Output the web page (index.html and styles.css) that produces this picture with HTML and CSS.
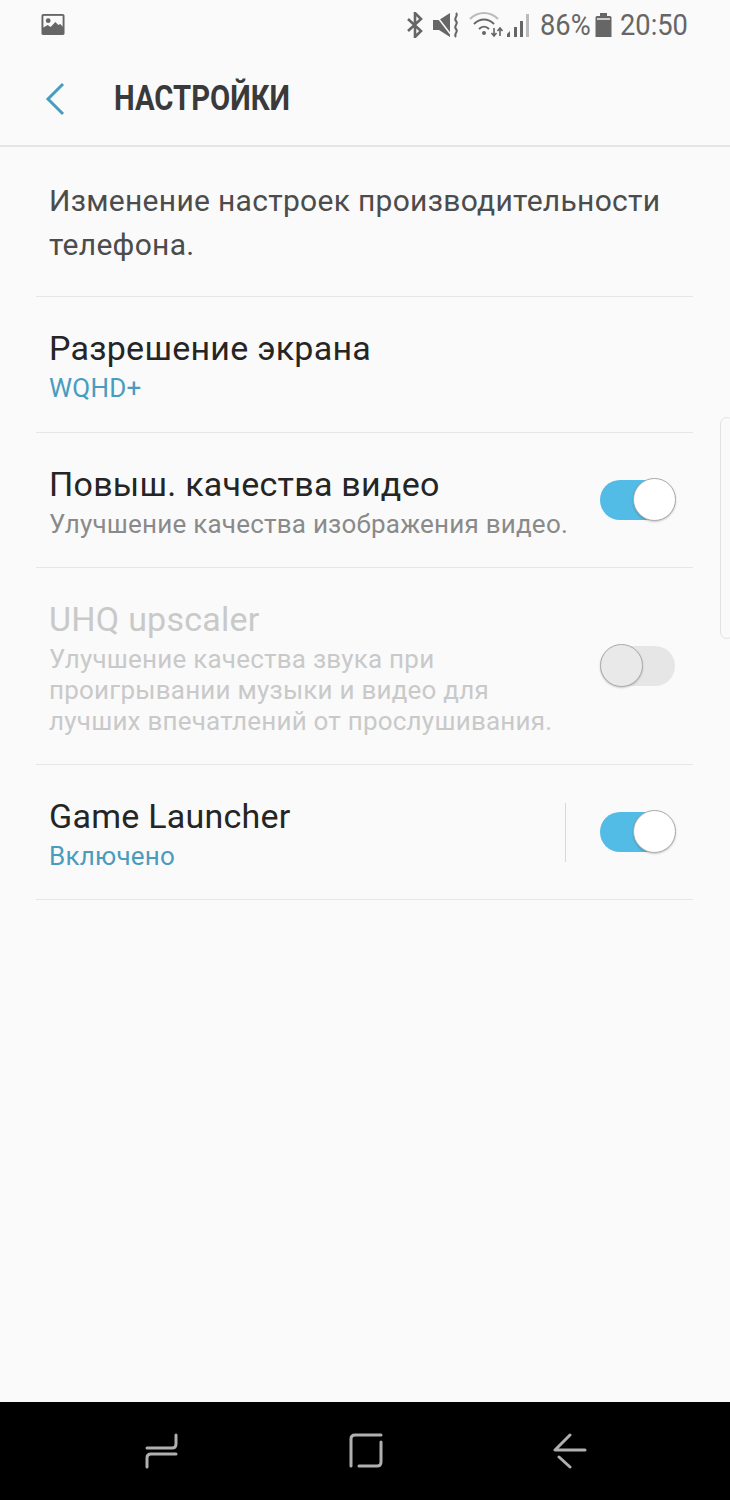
FILE: index.html
```html
<!DOCTYPE html>
<html>
<head>
    <title>Настройки</title>
    <meta charset="UTF-8">
    <meta name="viewport" content="width=device-width, initial-scale=1.0">
    <link rel="stylesheet" href="styles.css">
</head>
<body>
    <div class="screen">
        <div class="status-bar">
            <svg class="icon-picture" width="24" height="23" viewBox="0 0 25 23">
                <rect x="0.5" y="0.5" width="24" height="22" rx="2" fill="#666"/>
                <rect x="2.5" y="2.5" width="20" height="15" fill="#fafafa"/>
                <circle cx="7.5" cy="7.5" r="2.5" fill="#666"/>
                <path d="M2 20V15l5-3 3 2 5-5 3 3 2-1 3 3v6z" fill="#666"/>
            </svg>
            <div class="status-right">
                <svg width="18" height="26" viewBox="0 0 18 26" fill="none" stroke="#666" stroke-width="2.6">
                    <path d="M2 7l13 12-6 6V1l6 6L2 19"/>
                </svg>
                <svg class="icon-mute" width="27" height="26" viewBox="0 0 27 26">
                    <path d="M1 8h6l11-7v24l-11-7H1z" fill="#666"/>
                    <path d="M3 2l17 22" stroke="#fafafa" stroke-width="1.500"/>
                    <path d="M24 1c3 3-3 5 0 8s-3 5 0 8-3 5 0 8" fill="none" stroke="#666" stroke-width="2"/>
                </svg>
                <svg class="icon-wifi" width="34" height="26" viewBox="0 0 34 26" fill="none">
                    <path d="M1 7c8-8 20-8 28 0" stroke="#bbb" stroke-width="2"/>
                    <path d="M5 12c6-6 14-6 20 0" stroke="#666" stroke-width="2"/>
                    <path d="M10 17c3-3 7-3 10 0" stroke="#666" stroke-width="2"/>
                    <circle cx="15" cy="21" r="2" fill="#666"/>
                    <path d="M25 16v8M22.500 21l2.500 3 2.500-3M31 24v-8M28.500 19l2.500-3 2.500 3" stroke="#666" stroke-width="1.600"/>
                </svg>
                <svg class="icon-signal" width="24" height="26" viewBox="0 0 24 26">
                    <path d="M1 25v-3l3-3v6z" fill="#666"/>
                    <rect x="8" y="15" width="3" height="10" fill="#666"/>
                    <rect x="14" y="9" width="3" height="16" fill="#666"/>
                    <rect x="20" y="2" width="3" height="23" fill="#bbb"/>
                </svg>
                <span class="status-text percent">86%</span>
                <svg class="icon-battery" width="17" height="26" viewBox="0 0 17 26">
                    <path d="M5 1h7v3h3a1.500 1.500 0 0 1 1.500 1.500V25H.5V5.500A1.500 1.500 0 0 1 2 4h3z" fill="#666"/>
                    <rect x="2" y="6" width="13" height="2" fill="#ccc"/>
                </svg>
                <span class="status-text time">20:50</span>
            </div>
        </div>

        <div class="header">
            <svg class="back" width="20" height="34" viewBox="0 0 20 34" fill="none" stroke="#4a9cbf" stroke-width="3">
                <path d="M18 2L3 17l15 15"/>
            </svg>
            <h1 class="title">НАСТРОЙКИ</h1>
        </div>

        <div class="content">
            <div class="intro">Изменение настроек производительности телефона.</div>

            <div class="row row-first">
                <div class="row-text">
                    <div class="row-title">Разрешение экрана</div>
                    <div class="row-sub accent">WQHD+</div>
                </div>
            </div>

            <div class="row">
                <div class="row-text">
                    <div class="row-title">Повыш. качества видео</div>
                    <div class="row-sub">Улучшение качества изображения видео.</div>
                </div>
                <div class="toggle on"><div class="knob"></div></div>
            </div>

            <div class="row disabled">
                <div class="row-text">
                    <div class="row-title">UHQ upscaler</div>
                    <div class="row-sub">Улучшение качества звука при<br>проигрывании музыки и видео для<br>лучших впечатлений от прослушивания.</div>
                </div>
                <div class="toggle"><div class="knob"></div></div>
            </div>

            <div class="row">
                <div class="row-text">
                    <div class="row-title">Game Launcher</div>
                    <div class="row-sub accent">Включено</div>
                </div>
                <div class="vline"></div>
                <div class="toggle on"><div class="knob"></div></div>
            </div>
        </div>

        <div class="edge-handle"></div>

        <div class="nav-bar">
            <svg width="34" height="36" viewBox="0 0 34 36" fill="none" stroke="#b0b0b0" stroke-width="3" stroke-linecap="round" stroke-linejoin="round">
                <path d="M2 15h25q4 0 4-4V2"/>
                <path d="M31 21H6q-4 0-4 4v9"/>
            </svg>
            <svg width="34" height="36" viewBox="0 0 34 36" fill="none" stroke="#b0b0b0" stroke-width="3" stroke-linecap="round" stroke-linejoin="round">
                <path d="M2 33V6q0-4 4-4h26"/>
                <path d="M32 9v20q0 4-4 4H10"/>
            </svg>
            <svg width="34" height="36" viewBox="0 0 34 36" fill="none" stroke="#b0b0b0" stroke-width="3" stroke-linecap="round" stroke-linejoin="round">
                <path d="M17 2L2 17h30"/>
                <path d="M6 24l11 10"/>
            </svg>
        </div>
    </div>
</body>
</html>
```

FILE: styles.css
```css
html, body {
    margin: 0;
    padding: 0;
}
body {
    font-family: 'Roboto', 'Noto Sans', sans-serif;
    background-color: #fafafa;
    color: #252525;
}
.screen {
    position: relative;
    width: 730px;
    height: 1500px;
    display: flex;
    flex-direction: column;
    overflow: hidden;
}
.status-bar {
    height: 52px;
    box-sizing: border-box;
    padding: 12px 43px 0 41px;
    display: flex;
    justify-content: space-between;
    align-items: flex-start;
}
.icon-picture {
    margin-top: 1px;
}
.status-right {
    display: flex;
    align-items: center;
    height: 26px;
}
.icon-mute {
    margin-left: 8px;
}
.icon-wifi {
    margin-left: 10px;
}
.icon-signal {
    margin-left: 3px;
}
.icon-battery {
    margin-left: 5px;
}
.status-text {
    display: inline-block;
    font-size: 29px;
    line-height: 26px;
    color: #666;
    white-space: nowrap;
    transform: scaleX(0.94);
    transform-origin: left center;
}
.percent {
    width: 50px;
    margin-left: 10px;
}
.time {
    width: 67px;
    margin-left: 8px;
}
.header {
    height: 93px;
    border-bottom: 2px solid #e6e6e6;
    display: flex;
    align-items: center;
    padding-left: 45px;
}
.back {
    flex: none;
}
.title {
    margin: 0 0 0 49px;
    font-size: 35px;
    font-weight: 700;
    color: #3a3a3a;
    white-space: nowrap;
    transform: scaleX(0.836);
    transform-origin: left center;
}
.content {
    flex: 1;
    padding: 0 37px 0 36px;
}
.intro {
    height: 150px;
    box-sizing: border-box;
    padding: 32px 13px 0;
    font-size: 30px;
    line-height: 44px;
    color: #4c4c4c;
    letter-spacing: 0.3px;
    border-bottom: 1px solid #e6e6e6;
}
.row {
    display: flex;
    align-items: center;
    padding: 32px 18px 27px 13px;
    border-bottom: 1px solid #e6e6e6;
}
.row-first {
    padding-bottom: 28px;
}
.row-text {
    flex: 1;
}
.row-title {
    font-size: 34px;
    line-height: 39px;
    letter-spacing: 0.25px;
}
.row-sub {
    margin-top: 5px;
    font-size: 26px;
    line-height: 31px;
    color: #8a8a8a;
    letter-spacing: 0.22px;
}
.accent {
    color: #4a9cbf;
}
.disabled .row-title,
.disabled .row-sub {
    color: #c9c9c9;
}
.toggle {
    position: relative;
    width: 75px;
    height: 40px;
    margin-bottom: 5px;
    border-radius: 20px;
    background-color: #e6e6e6;
    flex: none;
}
.toggle.on {
    background-color: #52bce6;
}
.knob {
    position: absolute;
    left: 0;
    top: -2px;
    width: 41px;
    height: 41px;
    border-radius: 50%;
    background-color: #e9e9e9;
    border: 1px solid #aaa;
    box-shadow: 0 1px 2px rgba(0,0,0,0.2);
}
.toggle.on .knob {
    left: 33px;
    background-color: #fff;
}
.vline {
    width: 1px;
    height: 59px;
    margin-bottom: 5px;
    margin-right: 34px;
    background-color: #d8d8d8;
}
.edge-handle {
    position: absolute;
    left: 720px;
    top: 417px;
    width: 14px;
    height: 222px;
    box-sizing: border-box;
    border: 1px solid #e2e2e2;
    border-radius: 8px;
}
.nav-bar {
    height: 98px;
    background-color: #000;
    display: flex;
    align-items: center;
    padding-left: 145px;
    gap: 170px;
}
```
